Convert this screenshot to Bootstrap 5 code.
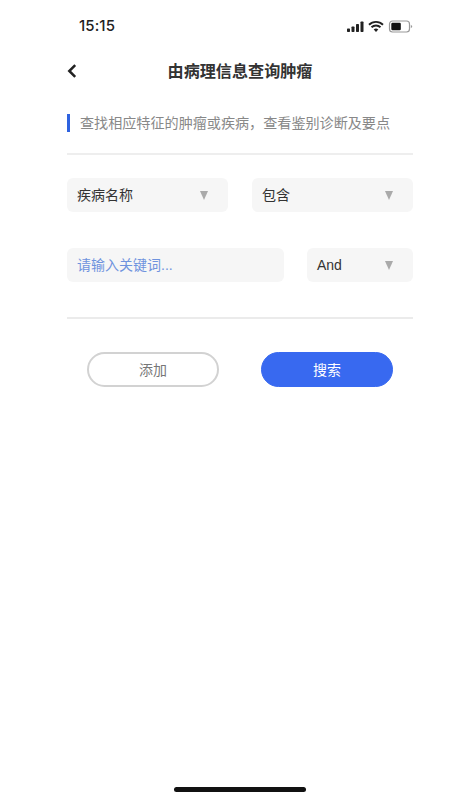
<!doctype html>
<html lang="zh">
<head>
<meta charset="utf-8">
<link rel="stylesheet" href="https://cdn.jsdelivr.net/npm/bootstrap@5.3.0/dist/css/bootstrap.min.css">
<style>
html,body{height:800px;overflow:hidden;background:#fff}
body{font-family:"Liberation Sans","Noto Sans CJK SC",sans-serif;color:#333}
.screen{height:800px;padding-left:67px;width:346px;box-sizing:content-box}
.status{height:52px;padding-top:16px;padding-left:12px}
.clock{font:500 15px/20px Inter,sans-serif;color:#222;letter-spacing:.1px}
.head{height:38px}
.title{font-size:16.1px;font-weight:700;color:#333;line-height:38px;width:346px;text-align:center}
.back{left:0;top:12px}
.intro{margin-top:24px;height:18px;font-size:14.1px;line-height:18px;color:#888;gap:10px}
.tick{width:3px;height:18px;background:#2f63e0}
.rule{height:2px;background:#eee;margin-top:21px}
.rule2{height:1.5px;background:#ebebeb;margin-top:35px}
.fields1{margin-top:23px;gap:24px}
.fields2{margin-top:36px;gap:23px}
.box{height:34px;background:#f6f6f6;border-radius:6px;padding:0 20px 0 10px;font-size:14px;color:#333}
.w-a{width:161px}.w-b{width:217px;color:#6f93de}.w-c{width:106px}
.tri{width:0;height:0;border-left:4.5px solid transparent;border-right:4.5px solid transparent;border-top:9px solid #aaa}
.acts{margin-top:33.500px;padding-left:20px;gap:42px}
.pill{width:132px;height:35px;border-radius:18px;font-size:14px;line-height:1;padding:0}
.pill-off{background:#fff;border:2px solid #d2d2d2;color:#777}
.pill-on{background:#3869f0;border:1px solid #3869f0;color:#fff}
.homebar{width:132px;height:5px;background:#111;border-radius:3px;margin-left:107px;margin-top:auto;margin-bottom:8px}
</style>
</head>
<body>
<div class="screen d-flex flex-column">
  <div class="status d-flex justify-content-between align-items-start">
    <span class="clock">15:15</span>
    <svg width="66" height="13" viewBox="0 0 66 13" class="me-n1 mt-1">
      <rect x="0" y="8.500" width="3" height="3.500" rx=".7" fill="#222"/>
      <rect x="4.500" y="6.500" width="3" height="5.500" rx=".7" fill="#222"/>
      <rect x="9" y="4" width="3" height="8" rx=".7" fill="#222"/>
      <rect x="13.500" y="1.500" width="3" height="10.500" rx=".7" fill="#222"/>
      <path d="M22 4.700a10 10 0 0 1 14 0M24.500 7.300a6.500 6.500 0 0 1 9 0" fill="none" stroke="#222" stroke-width="1.900"/>
      <path d="M26.700 9.500a3.300 3.300 0 0 1 4.600 0L29 12z" fill="#222"/>
      <rect x="42.500" y="1" width="20" height="11" rx="3" fill="none" stroke="#999" stroke-width="1.200"/>
      <rect x="44.300" y="2.800" width="9.500" height="7.400" rx="1.200" fill="#111"/>
      <path d="M63.800 5c1 .3 1.400 1 1.400 1.500S64.800 7.700 63.800 8z" fill="#999"/>
    </svg>
  </div>
  <div class="head position-relative">
    <svg class="back position-absolute" width="10" height="14" viewBox="0 0 10 14"><path d="M8.200 1.200 2.300 7l5.900 5.800" fill="none" stroke="#222" stroke-width="2.500"/></svg>
    <div class="title">由病理信息查询肿瘤</div>
  </div>
  <div class="intro d-flex align-items-center">
    <span class="tick"></span><span>查找相应特征的肿瘤或疾病，查看鉴别诊断及要点</span>
  </div>
  <div class="rule"></div>
  <div class="fields1 d-flex">
    <div class="box w-a d-flex align-items-center justify-content-between"><span>疾病名称</span><i class="tri"></i></div>
    <div class="box w-a d-flex align-items-center justify-content-between"><span>包含</span><i class="tri"></i></div>
  </div>
  <div class="fields2 d-flex">
    <div class="box w-b d-flex align-items-center"><span>请输入关键词...</span></div>
    <div class="box w-c d-flex align-items-center justify-content-between"><span>And</span><i class="tri"></i></div>
  </div>
  <div class="rule2"></div>
  <div class="acts d-flex">
    <button type="button" class="btn pill pill-off">添加</button>
    <button type="button" class="btn pill pill-on">搜索</button>
  </div>
  <div class="homebar"></div>
</div>
<script src="https://cdn.jsdelivr.net/npm/bootstrap@5.3.0/dist/js/bootstrap.bundle.min.js"></script>
</body>
</html>
